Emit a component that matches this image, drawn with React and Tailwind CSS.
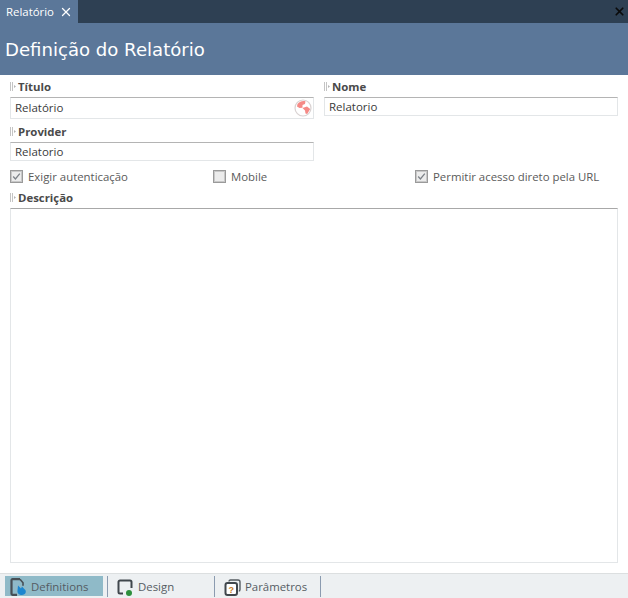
import { X } from "lucide-react";

const font = "font-['Open_Sans',sans-serif]";

const Grip = () => (
    <svg width="6" height="9" viewBox="0 0 6 9" className="shrink-0 mr-[2px]">
        <path d="M0.5 0v9M2.5 0v9" stroke="#c4c4c4" strokeWidth="1" />
        <path d="M4 3l2 1.5-2 1.5z" fill="#b5b5b5" />
    </svg>
);

const FieldLabel = ({ children }) => (
    <div className="flex items-center h-[19px] pb-[2px] text-[11.4px] font-bold text-[#4a4a4a] leading-none">
        <Grip />
        {children}
    </div>
);

const TextBox = ({ value, className = "", children }) => (
    <div className={`flex items-center justify-between border border-[#e3e6e8] border-t-[#b4b4b4] bg-white pl-[4px] pr-[1px] text-[11.5px] text-[#3b3b3b] ${className}`}>
        <span>{value}</span>
        {children}
    </div>
);

const Globe = () => (
    <svg width="18" height="18" viewBox="0 0 18 18">
        <circle cx="9" cy="9" r="8" fill="#fff" stroke="#d9d2d2" strokeWidth="1.2" />
        <path d="M3.5 5C5.5 2.2 9 1.4 11.5 2.2L11 5 8.5 6 8.5 8.8 5.5 9 3 7.5z" fill="#f58a86" />
        <path d="M8.5 9l4.5-1.5 3.2 2.5-3 5-1.7-.5-.5-3z" fill="#f58a86" />
    </svg>
);

const Check = ({ checked, className = "" }) => (
    <label className={`flex items-center gap-[5px] pt-[1px] text-[11.4px] text-[#5a5a5a] ${className}`}>
        {checked.box}
        {checked.text}
    </label>
);

const Box = ({ on }) => (
    <span className="flex items-center justify-center w-[13px] h-[13px] -mt-[1px] border border-[#9a9a9a] bg-[#ececec] shadow-[inset_0_0_0_1px_#c8c8c8]">
        {on && (
            <svg width="9" height="9" viewBox="0 0 9 9">
                <path d="M1.2 4.5l2.2 2.4L7.8 1.6" fill="none" stroke="#7d8288" strokeWidth="1.3" />
            </svg>
        )}
    </span>
);

const DefinitionsIcon = () => (
    <svg width="17" height="18" viewBox="0 0 17 18">
        <path d="M10 1.2H2.5a1 1 0 0 0-1 1v13.6a1 1 0 0 0 1 1H7" fill="none" stroke="#474f55" strokeWidth="2.2" />
        <path d="M10 1.2l3 3.5v3" fill="none" stroke="#474f55" strokeWidth="1.6" />
        <path d="M8 7.5l3 3 1-2 3.5 3.8c1 2.2-0.5 4.7-3.5 4.7-3 0-5-2-4.5-4.5z" fill="#1c86cf" />
    </svg>
);

const DesignIcon = () => (
    <svg width="17" height="17" viewBox="0 0 17 17">
        <path d="M6 14.5H3a1.5 1.5 0 0 1-1.5-1.5V3A1.5 1.5 0 0 1 3 1.5h10A1.5 1.5 0 0 1 14.5 3v6" fill="none" stroke="#40474c" strokeWidth="2" />
        <circle cx="12" cy="14" r="3" fill="#2d8f3c" />
    </svg>
);

const ParamsIcon = () => (
    <svg width="17" height="17" viewBox="0 0 17 17">
        <path d="M5 2.5c0-.8.5-1.5 1.5-1.5H14c1 0 2 1 2 2v7.5c0 1-.5 1.5-1.2 1.5" fill="none" stroke="#555c61" strokeWidth="1.4" />
        <rect x="1.5" y="4" width="11.5" height="12" rx="2" fill="#fff" stroke="#40474c" strokeWidth="2" />
        <text x="7.2" y="13.5" textAnchor="middle" fontSize="9" fontWeight="700" fill="#c77b1e" fontFamily="Liberation Sans, sans-serif">?</text>
    </svg>
);

const BottomTab = ({ icon, label, active, className = "" }) => (
    <div className={`flex items-center gap-[4px] h-[20px] pt-[2px] text-[11.4px] text-[#555c63] ${active ? "bg-[#8fbac8]" : ""} ${className}`}>
        {icon}
        <span>{label}</span>
    </div>
);

const App = () => {
    return (
        <div className={`w-[628px] h-[598px] flex flex-col bg-white overflow-hidden ${font}`}>
            <div className="h-[23px] flex justify-between items-center bg-[#2e4053] pr-[2px]">
                <div className="w-[78px] h-full bg-[#5b7799] flex items-center pl-[6px] gap-[5px] text-[11.4px] text-white">
                    <span>Relatório</span>
                    <X size={14} strokeWidth={2.2} color="#fff" />
                </div>
                <X size={13} strokeWidth={3.2} color="#0b0b0b" />
            </div>

            <div className="h-[52px] flex items-center bg-[#5b7799] pl-[5px] pt-[2px]">
                <h1 className="font-['DejaVu_Sans',sans-serif] text-[18.1px] text-white">Definição do Relatório</h1>
            </div>

            <div className="flex-1 flex flex-col px-[10px] pt-[3px] min-h-0">
                <div className="grid grid-cols-[304px_294px] gap-x-[10px]">
                    <div>
                        <FieldLabel>Título</FieldLabel>
                        <TextBox value="Relatório" className="h-[22px]">
                            <Globe />
                        </TextBox>
                    </div>
                    <div>
                        <FieldLabel>Nome</FieldLabel>
                        <TextBox value="Relatorio" className="h-[19px]" />
                    </div>
                    <div className="col-start-1 mt-[4px]">
                        <FieldLabel>Provider</FieldLabel>
                        <TextBox value="Relatorio" className="h-[19px]" />
                    </div>
                </div>

                <div className="flex items-center h-[13px] mt-[9px]">
                    <Check className="w-[203px]" checked={{ box: <Box on />, text: "Exigir autenticação" }} />
                    <Check className="w-[202px]" checked={{ box: <Box />, text: "Mobile" }} />
                    <Check checked={{ box: <Box on />, text: "Permitir acesso direto pela URL" }} />
                </div>

                <div className="mt-[6px]">
                    <FieldLabel>Descrição</FieldLabel>
                </div>
                <div className="flex-1 border border-[#e3e6e8] border-t-[#a8a8a8] mb-[10px]" />
            </div>

            <div className="h-[25px] flex items-start gap-[4px] bg-[#edf0f2] border-t border-[#dcdfe0] pl-[5px] pt-[2px]">
                <BottomTab active className="w-[98px] pl-[5px]" icon={<DefinitionsIcon />} label="Definitions" />
                <div className="w-px h-[21px] bg-[#8b9bb0]" />
                <BottomTab className="w-[98px] pl-[5px]" icon={<DesignIcon />} label="Design" />
                <div className="w-px h-[21px] bg-[#8b9bb0]" />
                <BottomTab className="w-[97px] pl-[5px]" icon={<ParamsIcon />} label="Parâmetros" />
                <div className="w-px h-[21px] bg-[#8b9bb0]" />
            </div>
        </div>
    );
};

export default App;
